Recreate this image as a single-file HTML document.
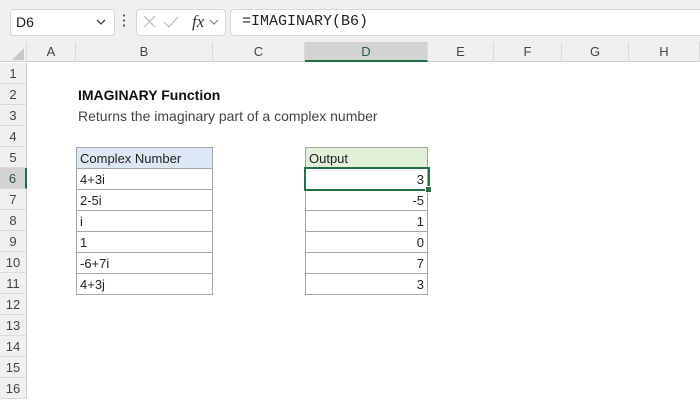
<!DOCTYPE html>
<html><head><style>
body{margin:0;width:700px;height:400px;overflow:hidden;background:#fff;font-family:"Liberation Sans",Arial,sans-serif;position:relative}
.a{position:absolute}
.tb{left:0;top:0;width:700px;height:42px;background:#f0f0f0}
.box{background:#fff;border:1px solid #d6d6d6;border-radius:4px}
.ch{top:42px;height:20px;background:#f0f0f0;border-bottom:1px solid #d0d0d0;font-size:13px;color:#444;text-align:center;line-height:20px;border-right:1px solid #dadada;box-sizing:border-box}
.rh{left:0;width:27px;height:21px;background:#f0f0f0;font-size:13px;color:#444;text-align:center;line-height:22px;border-bottom:1px solid #dadada;border-right:1px solid #d0d0d0;box-sizing:border-box}
.c{font-size:13px;color:#222;line-height:21px;height:22px;box-sizing:border-box;border:1px solid #a6a6a6;margin-top:-1px;padding:0 3px}
</style></head><body>
<div class="a tb"></div>
<div class="a box" style="left:10px;top:9px;width:103px;height:25px"></div>
<div class="a" style="left:16px;top:14px;font-size:14px;color:#222">D6</div>
<svg class="a" style="left:96px;top:18px" width="10" height="8"><path d="M1 2l4 4 4-4" stroke="#444" fill="none" stroke-width="1.3"/></svg>
<div class="a" style="left:123px;top:13px;width:2px;height:16px;background:radial-gradient(circle,#555 1px,transparent 1.2px) 0 0/2px 5px"></div>
<div class="a box" style="left:136px;top:9px;width:88px;height:25px"></div>
<svg class="a" style="left:142px;top:14px" width="80" height="16"><path d="M2 2l11 11M13 2L2 13" stroke="#bbb" stroke-width="1.2"/><path d="M22 8l5 5 9-10" stroke="#bbb" fill="none" stroke-width="1.2"/></svg>
<div class="a" style="left:192px;top:12px;font-size:17px;font-style:italic;font-family:'Liberation Serif',serif;color:#333">fx</div>
<svg class="a" style="left:209px;top:18px" width="10" height="8"><path d="M1 2l4 4 4-4" stroke="#888" fill="none" stroke-width="1.2"/></svg>
<div class="a box" style="left:230px;top:9px;width:480px;height:25px"></div>
<div class="a" style="left:242px;top:13px;font-size:15px;font-family:'Liberation Mono',monospace;color:#222">=IMAGINARY(B6)</div>
<div class="a ch" style="left:0;width:27px"></div>
<svg class="a" style="left:12px;top:48px" width="12" height="12"><path d="M12 0V12H0Z" fill="#c8c8c8"/></svg>
<div class="a ch" style="left:27px;width:49px">A</div>
<div class="a ch" style="left:76px;width:137px">B</div>
<div class="a ch" style="left:213px;width:92px">C</div>
<div class="a ch" style="left:305px;width:123px;background:#d3d3d3;border-bottom:2px solid #217346;color:#1e5f3a">D</div>
<div class="a ch" style="left:428px;width:66px">E</div>
<div class="a ch" style="left:494px;width:68px">F</div>
<div class="a ch" style="left:562px;width:67px">G</div>
<div class="a ch" style="left:629px;width:71px">H</div>
<div class="a rh" style="top:63px">1</div><div class="a rh" style="top:84px">2</div><div class="a rh" style="top:105px">3</div><div class="a rh" style="top:126px">4</div><div class="a rh" style="top:147px">5</div>
<div class="a rh" style="top:168px;background:#d3d3d3;color:#1e5f3a;border-right:2px solid #217346">6</div>
<div class="a rh" style="top:189px">7</div><div class="a rh" style="top:210px">8</div><div class="a rh" style="top:231px">9</div><div class="a rh" style="top:252px">10</div><div class="a rh" style="top:273px">11</div><div class="a rh" style="top:294px">12</div><div class="a rh" style="top:315px">13</div><div class="a rh" style="top:336px">14</div><div class="a rh" style="top:357px">15</div><div class="a rh" style="top:378px">16</div>
<div class="a" style="left:78px;top:87px;font-size:14px;font-weight:bold;color:#111">IMAGINARY Function</div>
<div class="a" style="left:78px;top:108px;font-size:14px;color:#444">Returns the imaginary part of a complex number</div>
<div class="a" style="left:76px;top:148px;width:137px">
<div class="c" style="background:#dde8f6">Complex Number</div><div class="c">4+3i</div><div class="c">2-5i</div><div class="c">i</div><div class="c">1</div><div class="c">-6+7i</div><div class="c">4+3j</div></div>
<div class="a" style="left:305px;top:148px;width:123px;text-align:right">
<div class="c" style="background:#e2f0d9;text-align:left">Output</div><div class="c">3</div><div class="c">-5</div><div class="c">1</div><div class="c">0</div><div class="c">7</div><div class="c">3</div></div>
<div class="a" style="left:304px;top:167px;width:122px;height:20px;border:2px solid #217346"></div>
<div class="a" style="left:425px;top:186px;width:5px;height:5px;background:#217346;border:1px solid #fff"></div>
</body></html>
